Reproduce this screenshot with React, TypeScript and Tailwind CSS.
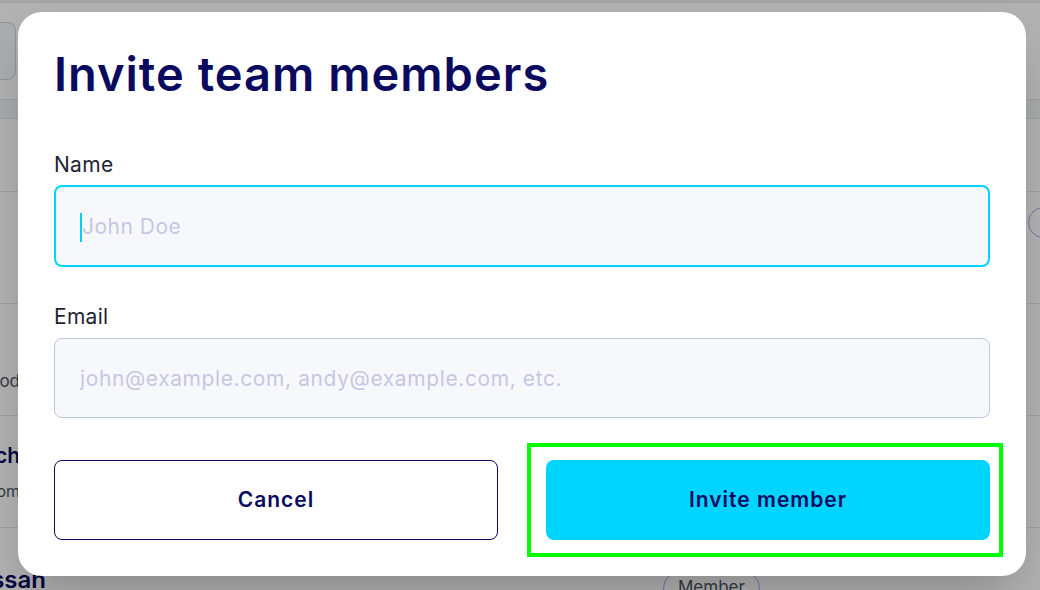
import React from 'react';

const font = { fontFamily: 'Inter, "Noto Sans", sans-serif' };

function Backdrop() {
  return (
    <div className="absolute inset-0 flex flex-col bg-white">
      <div className="h-[3px] shrink-0 bg-[#eef0f3] border-b border-[#e2e5ea]" />
      {/* page header */}
      <div className="h-[97px] shrink-0 border-b border-[#e2e5ea] pt-[19px]">
        <div className="ml-[-60px] w-[76px] h-[58px] rounded-lg border border-[#cfd4dc] bg-[#f7f8fa]" />
      </div>
      {/* table head */}
      <div className="h-[19px] shrink-0 bg-[#f4f5f7] border-b border-[#e2e5ea]" />
      <div className="h-[73px] shrink-0 border-b border-[#e2e5ea]" />
      <div className="h-[112px] shrink-0 border-b border-[#e2e5ea] flex justify-end pt-[15px]">
        <div className="mr-[-90px] w-[102px] h-[31px] rounded-full border border-[#a9a9e6]" />
      </div>
      <div className="h-[112px] shrink-0 border-b border-[#e2e5ea] flex items-end pb-[21px]">
        <div className="w-[20px] overflow-hidden flex justify-end whitespace-nowrap text-[17px] text-[#4b5563]">
          Good food
        </div>
      </div>
      <div className="h-[112px] shrink-0 border-b border-[#e2e5ea] flex flex-col pt-[24px] gap-[7px]">
        <div className="w-[20px] overflow-hidden flex justify-end whitespace-nowrap text-[21px] font-semibold text-[#0a0a5f]">
          Mitch
        </div>
        <div className="w-[20px] overflow-hidden flex justify-end whitespace-nowrap text-[16px] text-[#4b5563]">
          mitch@example.com
        </div>
      </div>
      <div className="flex-1 flex items-start pt-[34px]">
        <div className="w-[46px] overflow-hidden flex justify-end whitespace-nowrap text-[24px] font-semibold text-[#0a0a5f]">
          Hassan
        </div>
        <div className="ml-[617px] mt-[10px] px-[14px] h-[32px] rounded-full border border-[#a9a9e6] text-[17px] text-[#4b5563] flex items-center">
          Member
        </div>
      </div>
    </div>
  );
}

export default function App() {
  return (
    <div className="relative w-full h-[590px] overflow-hidden" style={font}>
      <Backdrop />
      <div className="absolute inset-0 bg-black/30" />

      {/* Invite modal */}
      <div className="absolute left-[18px] top-[12px] w-[1008px] h-[564px] rounded-[24px] bg-white shadow-2xl px-[36px] pt-[39px] pb-[36px] flex flex-col">
        <h1 className="text-[47px] leading-[45px] font-semibold tracking-[1px] text-[#0a0a5f]">
          Invite team members
        </h1>

        <label className="mt-[55px] text-[21px] leading-[28px] tracking-[0.3px] text-[#1f2433]">Name</label>
        <div className="relative mt-[6px] h-[82px] rounded-lg border-2 border-[#00d5ff] bg-[#f7f8fc] flex items-center">
          <span className="absolute left-[24px] top-[26px] w-[2px] h-[29px] bg-[#00cfff]" />
          <input
            className="w-full h-full bg-transparent pl-[26px] text-[21px] tracking-[0.5px] text-[#1f2433] outline-none placeholder:text-[#c7c7e1]"
            placeholder="John Doe"
          />
        </div>

        <label className="mt-[36px] text-[21px] leading-[28px] tracking-[0.3px] text-[#1f2433]">Email</label>
        <div className="mt-[7px] h-[80px] rounded-lg border border-[#b9c9dd] bg-[#f7f8fc] flex items-center">
          <input
            className="w-full h-full bg-transparent pl-[25px] text-[21px] tracking-[0.6px] text-[#1f2433] outline-none placeholder:text-[#c7c7e1]"
            placeholder="john@example.com, andy@example.com, etc."
          />
        </div>

        <div className="mt-[42px] grid grid-cols-2 gap-12">
          <button className="h-[80px] rounded-lg border border-[#0a0a5f] bg-white text-[21px] font-semibold tracking-[1px] text-[#0a0a5f]">
            Cancel
          </button>
          <div className="relative">
            <span className="pointer-events-none absolute -left-[19px] -top-[17px] -right-[13px] -bottom-[17px] border-4 border-[#00ff00]" />
            <button className="w-full h-[80px] rounded-lg bg-[#00d4ff] text-[21px] font-semibold tracking-[1px] text-[#0a0a5f]">
              Invite member
            </button>
          </div>
        </div>
      </div>
    </div>
  );
}
